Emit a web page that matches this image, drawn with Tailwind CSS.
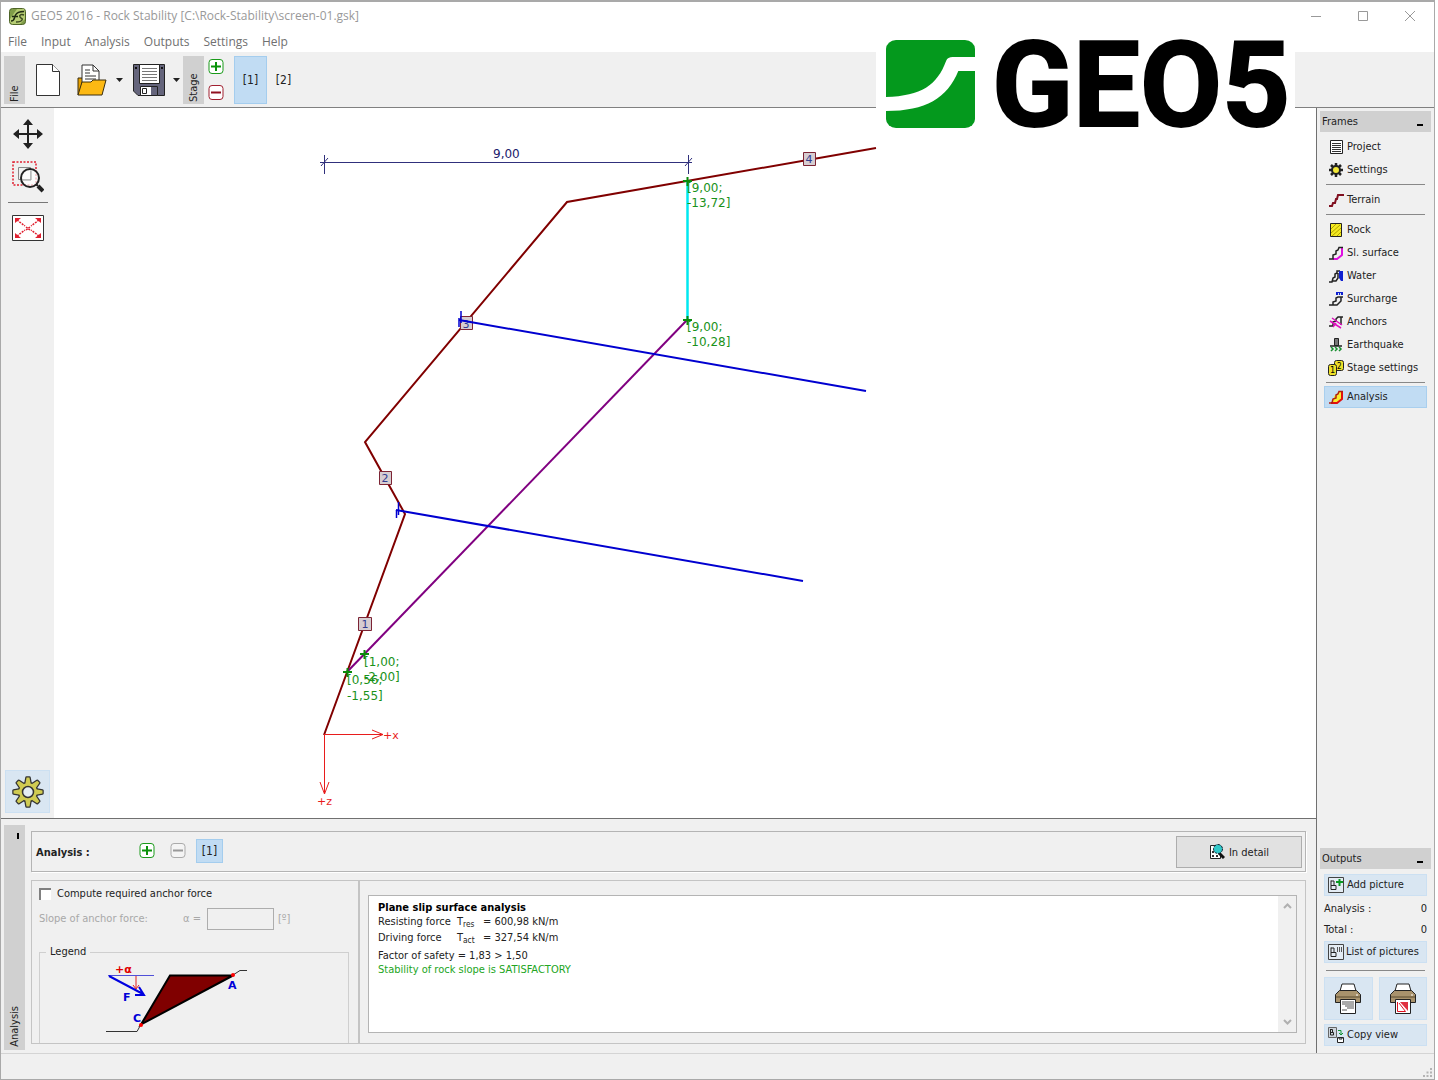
<!DOCTYPE html>
<html lang="en">
<head>
  <meta charset="UTF-8" />
  <meta name="viewport" content="width=device-width, initial-scale=1.0" />
  <title>GEO5 2016 - Rock Stability</title>
  <script src="https://cdn.jsdelivr.net/npm/@tailwindcss/browser@4"></script>
</head>
<body class="h-screen bg-white pr-[3px] font-['DejaVu_Sans_Condensed','DejaVu_Sans',sans-serif] text-[11px] leading-[14px] text-[#222]">
  <div class="relative flex h-full min-h-[720px] flex-col overflow-hidden border border-t-2 border-[#a9a9a9] bg-[#f0f0f0]">

    <!-- Title bar -->
    <header class="bg-white font-['Open_Sans',sans-serif] text-[12px]">
      <div class="flex h-7 items-center pl-2">
        <svg class="mr-[5px] h-[17px] w-[17px]" viewBox="0 0 17 17">
          <rect x="0.5" y="0.5" width="16" height="16" rx="3" fill="#7f9c48" stroke="#4e6427" />
          <path d="M1 11 8 1h7l1 4v6l-5 5H3l-2-2z" fill="#b5cc73" />
          <path d="M2 13c4 0 3-3 4.500-6S11 3.500 15 3.500M3 8.500h6" fill="none" stroke="#1f2a12" stroke-width="1.500" />
          <path d="M15 7c-3-1-5 0-4 2s3 1 2 3-4 2-6 2" fill="none" stroke="#3c4a22" stroke-width="1.500" />
        </svg>
        <h1 class="text-[#999]">GEO5 2016 - Rock Stability [C:\Rock-Stability\screen-01.gsk]</h1>
        <div class="ml-auto flex pr-px text-[#999]">
          <button aria-label="Minimize" class="flex h-7 w-[47px] items-center justify-center"><svg class="h-3 w-3" viewBox="0 0 12 12" stroke="currentColor"><path d="M1 6.500h10" /></svg></button>
          <button aria-label="Maximize" class="flex h-7 w-[47px] items-center justify-center"><svg class="h-3 w-3" viewBox="0 0 12 12" fill="none" stroke="currentColor"><path d="M1.500 1.500h9v9h-9z" /></svg></button>
          <button aria-label="Close" class="flex h-7 w-[47px] items-center justify-center"><svg class="h-3 w-3" viewBox="0 0 12 12" stroke="currentColor"><path d="m1 1 10 10M11 1 1 11" /></svg></button>
        </div>
      </div>
      <nav class="flex h-[22px] items-center gap-[14px] pt-[2px] pl-[7px] text-[#707070]">
        <a href="#">File</a>
        <a href="#">Input</a>
        <a href="#">Analysis</a>
        <a href="#">Outputs</a>
        <a href="#">Settings</a>
        <a href="#">Help</a>
      </nav>
    </header>

    <!-- Toolbar -->
    <div class="flex h-14 shrink-0 items-center border-b border-[#808080] pl-[3px]">
      <div class="flex h-12 w-[21px] items-center bg-[#d0d0d0] pl-1"><span class="h-full rotate-180 pt-[2px] [writing-mode:vertical-rl]">File</span></div>
      <button aria-label="New" class="ml-[11px] h-8 w-6">
        <svg viewBox="0 0 24 32" fill="#fff" stroke="#333"><path d="M.5.5h16l7 7v24H.5z" /><path d="M16.500.500v7h7" /></svg>
      </button>
      <button aria-label="Open" class="ml-[17px] h-8 w-[31px]">
        <svg viewBox="0 0 31 32" stroke="#3a2e10">
          <path d="M1 31V14h4l2 3h19v4" fill="#e8a000" />
          <path d="M5 21V1h11l6 6v14z" fill="#fff" stroke="#333" />
          <path d="M16 1v6h6M8 6h5M8 9h5M8 12h11M8 15h11" fill="none" stroke="#333" />
          <path d="M1 31 5 18h9l2-2h13l-4 15z" fill="#fdb913" />
        </svg>
      </button>
      <button aria-label="Open recent" class="ml-2 w-[7px]"><svg viewBox="0 0 7 4"><path d="M0 0h7L3.500 4z" fill="#222" /></svg></button>
      <button aria-label="Save" class="ml-[10px] h-8 w-8">
        <svg viewBox="0 0 32 32">
          <path d="M.5.5h31v31H5l-4.500-4.500z" fill="#65657c" stroke="#222" />
          <path d="M6.500.500h20v19h-20z" fill="#fff" stroke="#222" />
          <path d="M9 4.500h15M9 7.500h15M9 10.500h15M9 13.500h15M9 16.500h15" stroke="#777" />
          <path d="M2 3h2v2H2zM28 3h2v2h-2z" fill="#111" />
          <path d="M7.500 22.500h17v9h-17z" fill="#fff" stroke="#222" />
          <path d="M9.500 24.500h4v5h-4z" fill="#fff" stroke="#222" /><path d="M18 23h6v8h-6z" fill="#65657c" />
        </svg>
      </button>
      <button aria-label="Save options" class="ml-2 w-[7px]"><svg viewBox="0 0 7 4"><path d="M0 0h7L3.500 4z" fill="#222" /></svg></button>
      <div class="ml-[3px] flex h-12 w-[21px] items-center bg-[#d0d0d0] pl-1"><span class="h-full rotate-180 pt-[2px] [writing-mode:vertical-rl]">Stage</span></div>
      <div class="ml-1 flex flex-col gap-[11px]">
        <button aria-label="Add stage" class="h-[15px] w-4"><svg viewBox="0 0 16 15"><rect x="1" y="0.5" width="14" height="14" rx="3" fill="#fff" stroke="#1a9a1a" /><path d="M3 7.500h10M8 3v9" stroke="#0a920a" stroke-width="2" /></svg></button>
        <button aria-label="Remove stage" class="h-[15px] w-4"><svg viewBox="0 0 16 15"><rect x="1" y="0.5" width="14" height="14" rx="3" fill="#fff" stroke="#a02030" /><path d="M3 7.500h10" stroke="#901020" stroke-width="2" /></svg></button>
      </div>
      <button class="ml-[10px] h-12 w-[33px] border border-[#a4cdee] bg-[#c1dcf3] text-[12px]">[1]</button>
      <button class="h-12 w-[33px] text-[12px]">[2]</button>
    </div>

    <!-- Brand logo over the toolbar -->
    <div class="absolute top-[30px] right-[139px] flex h-[104px] w-[419px] items-center bg-white pl-[10px]">
      <svg class="h-[88px] w-[89px]" viewBox="0 0 80 88" preserveAspectRatio="none">
        <rect width="80" height="88" rx="9" fill="#04991d" />
        <path d="M0 57C32 56 46 45 54 21c1-3 3-4 6-4h20v14H65C55 58 36 71 0 71z" fill="#fff" />
      </svg>
      <span class="mt-1 ml-[17px] font-['Roboto',sans-serif] text-[119px] leading-[104px] font-bold text-black [-webkit-text-stroke:2px_black]">GEO5</span>
    </div>

    <div class="flex min-h-0 flex-1">
      <div class="flex min-w-0 flex-1 flex-col">
        <div class="flex min-h-0 flex-1">
          <!-- View tools -->
          <aside class="flex w-[53px] shrink-0 flex-col items-center pt-[10px] pb-[5px]">
            <button aria-label="Move" class="h-8 w-8">
              <svg viewBox="0 0 32 32" fill="#222"><path d="M15 6h2v20h-2zM6 15h20v2H6z" /><path d="m16 1 5 6H11zM16 31l5-6H11zM1 16l6-5v10zM31 16l-6-5v10z" /></svg>
            </button>
            <button aria-label="Zoom window" class="mt-[11px] h-8 w-8">
              <svg viewBox="0 0 32 32" fill="none"><path d="M1 1h23v23H1z" stroke="#e02030" stroke-width="1.500" stroke-dasharray="2 1.500" /><path d="M6.500 6.500h12v12h-12z" stroke="#888" /><circle cx="18" cy="17" r="9" fill="#fff" fill-opacity=".7" stroke="#222" stroke-width="2" /><path d="M11 19h8v-9" stroke="#999" /><path d="m24 23 2 2" stroke="#222" stroke-width="2" /><path d="m26 25 5 5" stroke="#222" stroke-width="4" /></svg>
            </button>
            <hr class="mt-[9px] w-10 border-[#777]" />
            <button aria-label="Zoom all" class="mt-3 h-[26px] w-8">
              <svg viewBox="0 0 32 26" fill="none"><path d="M.5.5h31v25H.5z" fill="#fff" stroke="#333" /><path d="m5 5 8 6M27 5l-8 6M5 21l8-6M27 21l-8-6M14 12l4 3M18 12l-4 3" stroke="#e02030" stroke-width="1.500" stroke-dasharray="2 1" /><path d="M3 3h6L3 8zM29 3h-6l6 5zM3 23h6l-6-5zM29 23h-6l6-5z" fill="#e02030" /></svg>
            </button>
            <button aria-label="View settings" class="mt-auto flex h-[43px] w-[45px] items-center justify-center border border-[#cce0f2] bg-[#d9e6f2]">
              <svg class="h-8 w-8" viewBox="-16 -16 32 32" stroke-linejoin="round">
                <defs><path id="cog" d="M-1.500-14.500h3L2.500-9V9l-1 5.500h-3L-2.500 9V-9z" /></defs>
                <g fill="#333" stroke="#333" stroke-width="2.500"><use href="#cog" /><use href="#cog" transform="rotate(45)" /><use href="#cog" transform="rotate(90)" /><use href="#cog" transform="rotate(135)" /><circle r="9" /></g>
                <g fill="#d0cb52"><use href="#cog" /><use href="#cog" transform="rotate(45)" /><use href="#cog" transform="rotate(90)" /><use href="#cog" transform="rotate(135)" /><circle r="9" /></g>
                <circle r="5.500" fill="#e4edf4" stroke="#333" stroke-width="1.500" />
              </svg>
            </button>
          </aside>

          <!-- Drawing area -->
          <main class="min-w-0 flex-1 bg-white">
            <svg class="h-full w-full font-['DejaVu_Sans',sans-serif] text-[12px]" viewBox="54 108 1262 710" preserveAspectRatio="xMinYMin meet" fill="none">
              <g stroke="#30307c"><path d="M324.500 155v19M688.500 155v19M320 162.500h372" /><path d="m321 166 7-8M685 166l7-8" /></g>
              <text x="493" y="158" fill="#20206c">9,00</text>
              <path d="M324 735 405 514 365 442 567 202 876 148" stroke="#800000" stroke-width="2" />
              <path d="M347 672 687 320" stroke="#800080" stroke-width="2" />
              <path d="M687.500 181v139" stroke="#00e8f0" stroke-width="2.500" />
              <g fill="#d6cdd1" stroke="#7c2434">
                <path d="M358.500 617.500h13v13h-13zM379.500 471.500h12v13h-12zM460.500 316.500h12v13h-12zM803.500 152.500h12v13h-12z" />
              </g>
              <g fill="#303c90" text-anchor="middle" class="text-[11px]">
                <text x="365" y="628">1</text><text x="385" y="482">2</text><text x="466" y="328">3</text><text x="809" y="163">4</text>
              </g>
              <g stroke="#0000d0" stroke-width="2"><path d="M459 320 866 391M396 510 803 581" /><path d="M461 311v12M459 318v9M398.500 502v13M396.500 510v8" stroke-width="1.500" /></g>
              <g stroke="#0a8a0a" stroke-width="2">
                <path d="M683 181h9M687.500 177v9M683 320h9M687.500 316v9M360 654h9M364.500 650v9M343 672h9M347.500 668v9" />
              </g>
              <g fill="#1a921a">
                <text x="687" y="192">[9,00;</text><text x="687" y="207">-13,72]</text>
                <text x="687" y="331">[9,00;</text><text x="687" y="346">-10,28]</text>
                <text x="364" y="666">[1,00;</text><text x="364" y="681">-2,00]</text>
                <text x="347" y="684">[0,56;</text><text x="347" y="700">-1,55]</text>
              </g>
              <path d="M324.500 735v58M324 734.500h59M372 730l11 4.500-11 4.500M320 782l4.500 12 4.500-12" stroke="#e81c1c" />
              <g fill="#e81c1c" class="text-[11px]"><text x="383" y="739">+x</text><text x="317" y="805">+z</text></g>
            </svg>
          </main>
        </div>

        <!-- Analysis panel -->
        <section class="flex h-[235px] shrink-0 border-t border-[#707070] pt-[6px] pl-[3px]">
          <div class="mb-[3px] flex w-[21px] flex-col items-center justify-between bg-[#d0d0d0] pt-2">
            <button aria-label="Collapse" class="ml-[6px] h-[6px] w-[2px] bg-black"></button>
            <span class="rotate-180 pt-[3px] [writing-mode:vertical-rl]">Analysis</span>
          </div>
          <div class="mr-[10px] ml-[6px] flex min-w-0 flex-1 flex-col pt-[6px]">
            <div class="flex h-[41px] items-center border border-[#b4b4b4] pr-[3px] pl-1 shadow-[1px_1px_0_#fff]">
              <h2 class="w-[103px] pt-[2px] font-bold">Analysis :</h2>
              <div class="flex items-center pb-[2px]">
                <button aria-label="Add analysis" class="h-[15px] w-4"><svg viewBox="0 0 16 15"><rect x="1" y="0.5" width="14" height="14" rx="3" fill="#fff" stroke="#1a9a1a" /><path d="M3 7.500h10M8 3v9" stroke="#0a920a" stroke-width="2" /></svg></button>
                <button aria-label="Remove analysis" disabled class="ml-[15px] h-[15px] w-4"><svg viewBox="0 0 16 15"><rect x="1" y="0.5" width="14" height="14" rx="3" fill="#f4f4f4" stroke="#aaa" /><path d="M3 7.500h10" stroke="#999" stroke-width="2" /></svg></button>
                <button class="ml-[10px] h-6 w-[27px] border border-[#a4cdee] bg-[#c1dcf3] text-[12px]">[1]</button>
              </div>
              <button class="ml-auto flex h-8 w-[126px] items-center justify-center gap-1 border border-[#adadad] bg-[#e1e1e1] pt-px">
                <svg class="h-4 w-4" viewBox="0 0 16 16"><path d="M1.500 1.500h10v13h-10z" fill="#fff" stroke="#222" /><path d="M3 8h2M3 12h2M7 12h2" stroke="#333" stroke-width="2" /><path d="m10 9 5 5" stroke="#111" stroke-width="3" /><circle cx="9" cy="5" r="4.500" fill="#30c8c8" stroke="#123" stroke-dasharray="3 1" /></svg>
                <span class="pt-px">In detail</span>
              </button>
            </div>
            <div class="mt-2 flex h-[164px]">
              <div class="flex w-[328px] flex-col border border-[#c4c4c4] pr-[9px] pl-[7px]">
                <label class="mt-[6px] flex items-center gap-[6px]">
                  <input type="checkbox" class="h-3 w-3 appearance-none border-t-2 border-l-2 border-[#808080] bg-white" />
                  Compute required anchor force
                </label>
                <div class="mt-[7px] flex h-[22px] items-center text-[#a8a8a8]">
                  <label for="slope" class="flex w-[168px] justify-between pr-[6px]"><span>Slope of anchor force:</span><span>α =</span></label>
                  <input id="slope" type="text" disabled class="h-[22px] w-[67px] border border-[#adadad] bg-[#f0f0f0]" />
                  <span class="ml-1">[º]</span>
                </div>
                <fieldset class="mt-[15px] min-h-0 flex-1 border border-b-0 border-[#cfcfcf] px-[6px]">
                  <legend class="px-1">Legend</legend>
                  <svg class="mt-[2px] ml-[59px] h-[72px] w-[144px] font-['DejaVu_Sans',sans-serif] text-[11px] font-bold" viewBox="105 961 144 72" fill="none">
                    <path d="M106 1031.500h31l5-9M233 975l7-4.500h7" stroke="#333" />
                    <path d="M170 975.500h63l-92 49z" fill="#800000" stroke="#000" stroke-width="2" />
                    <path d="M108 975.500h46" stroke="#5050d8" />
                    <path d="m109 976 34 18M135 995h9l-5-8" stroke="#0000e0" stroke-width="2" />
                    <path d="M136 976v12M133 985l3 4 3-4" stroke="#e02020" />
                    <circle cx="141" cy="1025" r="2" fill="#f00" /><circle cx="233" cy="975" r="2" fill="#f00" />
                    <text x="115" y="973" fill="#e00000">+α</text>
                    <g fill="#0000d8"><text x="123" y="1001">F</text><text x="133" y="1022">C</text><text x="228" y="989">A</text></g>
                  </svg>
                </fieldset>
              </div>
              <div class="min-w-0 flex-1 border border-[#c4c4c4] pt-[14px] pr-[8px] pb-[10px] pl-[8px]">
                <div class="flex h-full border border-[#b4b4b4] bg-white">
                  <div class="flex-1 pt-[5px] pl-[9px]">
                    <h3 class="font-bold text-black">Plane slip surface analysis</h3>
                    <table class="leading-[14px]">
                      <tbody>
                        <tr class="h-4"><td class="w-[79px] p-0 align-top">Resisting force</td><td class="w-[26px] p-0 align-top">T<sub>res</sub></td><td class="p-0 align-top">= 600,98 kN/m</td></tr>
                        <tr class="h-4"><td class="p-0 align-top">Driving force</td><td class="p-0 align-top">T<sub>act</sub></td><td class="p-0 align-top">= 327,54 kN/m</td></tr>
                      </tbody>
                    </table>
                    <p class="mt-[2px]">Factor of safety = 1,83 &gt; 1,50</p>
                    <p class="text-[#22a522]">Stability of rock slope is SATISFACTORY</p>
                  </div>
                  <div class="flex w-[18px] flex-col items-center justify-between bg-[#f0f0f0] py-[7px]">
                    <svg class="h-[6px] w-[9px]" viewBox="0 0 9 6" fill="none" stroke="#b0b0b0" stroke-width="2"><path d="m1 5 3.500-3.500L8 5" /></svg>
                    <svg class="h-[6px] w-[9px]" viewBox="0 0 9 6" fill="none" stroke="#b0b0b0" stroke-width="2"><path d="m1 1 3.500 3.500L8 1" /></svg>
                  </div>
                </div>
              </div>
            </div>
          </div>
        </section>
      </div>

      <!-- Frames and outputs -->
      <aside class="flex w-[118px] shrink-0 flex-col border-l border-[#707070] pt-[3px] pr-[3px] pl-[3px]">
        <div class="flex h-[21px] shrink-0 items-center justify-between bg-[#d0d0d0] pr-2 pl-[2px]">Frames <button aria-label="Collapse frames" class="mt-[7px] h-[2px] w-[6px] bg-black"></button></div>
        <nav class="mt-[3px] flex flex-col px-1">
          <a href="#" class="flex h-[23px] items-center gap-[3px] pl-1">
            <svg class="h-4 w-4" viewBox="0 0 16 16"><path d="M2.500 1.500h12v13h-12z" fill="#fff" stroke="#222" /><path d="M4 4.500h9M4 6.500h9M4 8.500h9M4 10.500h9M4 12.500h9" stroke="#333" /></svg>Project</a>
          <a href="#" class="flex h-[23px] items-center gap-[3px] pl-1">
            <svg class="h-4 w-4" viewBox="-8 -8 16 16"><path d="M-7 0H7M0-7V7M-5-5 5 5M5-5-5 5" stroke="#222" stroke-width="2.500" /><circle r="4" fill="#f2e838" stroke="#222" stroke-width="2" /></svg>Settings</a>
          <hr class="mx-[2px] my-[3px] border-[#888]" />
          <a href="#" class="flex h-[23px] items-center gap-[3px] pl-1">
            <svg class="h-4 w-4" viewBox="0 0 16 16" fill="none"><path d="M1 14h3l1-3h2l1-4h1l1-4h6" stroke="#801020" stroke-width="2" /></svg>Terrain</a>
          <hr class="mx-[2px] my-[3px] border-[#888]" />
          <a href="#" class="flex h-[23px] items-center gap-[3px] pl-1">
            <svg class="h-4 w-4" viewBox="0 0 16 16"><path d="M2.500 1.500h11v13h-11z" fill="#f4ea20" stroke="#222" /><path d="m3 7 5-5M3 11l9-8M4 14l9-8M9 14l4-4" stroke="#b0a000" /></svg>Rock</a>
          <a href="#" class="flex h-[23px] items-center gap-[3px] pl-1">
            <svg class="h-4 w-4" viewBox="0 0 16 16" fill="none"><path d="M5 14h4l5-4V2.500" stroke="#e010e0" stroke-width="2" /><path d="M1 14h4v-4l3-1V6l2-1 1-2.500h4" stroke="#222" stroke-width="1.500" /></svg>Sl. surface</a>
          <a href="#" class="flex h-[23px] items-center gap-[3px] pl-1">
            <svg class="h-4 w-4" viewBox="0 0 16 16" fill="none"><path d="M1 14h3l1-4 2-1V6l2-1V3h3M4 13h4l2-3V5" stroke="#222" stroke-width="1.500" /><path d="M11 3h4v10h-2l-2-3z" fill="#1020d0" /></svg>Water</a>
          <a href="#" class="flex h-[23px] items-center gap-[3px] pl-1">
            <svg class="h-4 w-4" viewBox="0 0 16 16" fill="none"><path d="M1 14h4v-3l3-1V7l2-1h5M5 14h4l4-4V6" stroke="#222" stroke-width="1.500" /><path d="M8 1h7v3H8z" fill="#1020d0" /><path d="M10.500 2v2M12.500 2v2" stroke="#cde" /></svg>Surcharge</a>
          <a href="#" class="flex h-[23px] items-center gap-[3px] pl-1">
            <svg class="h-4 w-4" viewBox="0 0 16 16" fill="none"><path d="M1 12h4V8l3-1V5l2-2h5M13 11V3" stroke="#222" stroke-width="1.500" /><path d="m4 4 10 7M2 7l11 7M5 13l3-4" stroke="#e010c0" stroke-width="1.500" /></svg>Anchors</a>
          <a href="#" class="flex h-[23px] items-center gap-[3px] pl-1">
            <svg class="h-4 w-4" viewBox="0 0 16 16" fill="none"><path d="M6.500 1.500h4v7h-4z" fill="#777" stroke="#222" /><path d="M2 9h12" stroke="#222" stroke-width="1.500" /><path d="m3 10 2 2-2 2M7 10l2 2-2 2M11 10l2 2-2 2" stroke="#189030" stroke-width="1.500" /></svg>Earthquake</a>
          <a href="#" class="flex h-[23px] items-center gap-[3px] pl-1">
            <svg class="h-4 w-4" viewBox="0 0 16 16"><rect x="6.500" y="0.5" width="9" height="10" rx="2" fill="#eee028" stroke="#222" /><rect x="0.5" y="4.500" width="8" height="11" rx="2" fill="#eee028" stroke="#222" /><text x="2" y="13" font-size="9">1</text><text x="9" y="9" font-size="8">2</text></svg>Stage settings</a>
          <hr class="mx-[2px] my-[3px] border-[#888]" />
          <a href="#" class="flex h-[22px] items-center gap-[3px] border border-[#a9cfee] bg-[#c1dcf3] pl-[3px]">
            <svg class="h-4 w-4" viewBox="0 0 16 16" fill="none"><path d="M4 14h5l5-5V3h-4l-1 3-3 1v3H4z" fill="#f8ee30" /><path d="M3 14h6l5-4V2.500" stroke="#e01010" stroke-width="2" /><path d="M1 14h3l1-4 3-1V6l2-1 1-2.500h4" stroke="#b02010" stroke-width="1.500" /></svg>Analysis</a>
        </nav>

        <div class="mt-auto flex h-[21px] shrink-0 items-center justify-between bg-[#d0d0d0] pr-2 pl-[2px]">Outputs <button aria-label="Collapse outputs" class="mt-[7px] h-[2px] w-[6px] bg-black"></button></div>
        <div class="flex flex-col px-1 pt-[5px] pb-[7px]">
          <button class="flex h-[22px] items-center gap-[3px] border border-[#cce0f2] bg-[#d9e6f2] pl-[3px]">
            <svg class="h-4 w-4" viewBox="0 0 16 16" fill="none"><path d="M.5.5h15v15H.5z" fill="#e4ecf4" stroke="#444" /><path d="M3 3.500v9h5v-4H3M3 4h3v4" stroke="#222" /><path d="M8 5h7M11.500 2v7" stroke="#089820" stroke-width="2" /></svg>Add picture</button>
          <p class="mt-[2px] flex h-[21px] items-center justify-between">Analysis : <span>0</span></p>
          <p class="flex h-[21px] items-center justify-between">Total : <span>0</span></p>
          <button class="mt-[1px] flex h-[22px] items-center gap-[2px] border border-[#cce0f2] bg-[#d9e6f2] pl-[3px] whitespace-nowrap">
            <svg class="h-4 w-4 shrink-0" viewBox="0 0 16 16" fill="none"><path d="M.5.5h15v15H.5z" fill="#e4ecf4" stroke="#444" /><path d="M3 3.500v9h5v-4H3M3 4h3v4" stroke="#222" /><path d="M9.500 3v5M11.500 3v5M13.500 3v5" stroke="#555" /></svg>List of pictures</button>
          <hr class="mx-[2px] mt-[7px] mb-[6px] border-[#888]" />
          <div class="grid grid-cols-2 gap-[6px]">
            <button aria-label="Print text" class="flex h-[43px] items-center justify-center border border-[#cce0f2] bg-[#d9e6f2]">
              <svg class="h-8 w-[26px]" viewBox="0 0 26 32"><path d="m5 8 2-7h12l2 7z" fill="#fff" stroke="#222" /><path d="M.5 11.500l4-4h17l4 4v8H.500z" fill="#a8926c" stroke="#222" /><path d="M1 14h24" stroke="#5a4c30" /><path d="M21 12h2" stroke="#fff" /><path d="M5.500 16.500h15v14h-15z" fill="#fff" stroke="#222" /><path d="M7 19h12M7 21h12M10 23h9M12 25h7M7 27h5" stroke="#555" /></svg>
            </button>
            <button aria-label="Print picture" class="flex h-[43px] items-center justify-center border border-[#cce0f2] bg-[#d9e6f2]">
              <svg class="h-8 w-[26px]" viewBox="0 0 26 32"><path d="m5 8 2-7h12l2 7z" fill="#fff" stroke="#222" /><path d="M.5 11.500l4-4h17l4 4v8H.500z" fill="#a8926c" stroke="#222" /><path d="M1 14h24" stroke="#5a4c30" /><path d="M21 12h2" stroke="#fff" /><path d="M5.500 16.500h15v14h-15z" fill="#fff" stroke="#222" /><path d="M10 19h8v9z" fill="#e03040" /><path d="M7.500 19v9.500h8L9 20" fill="none" stroke="#e01020" /></svg>
            </button>
          </div>
          <button class="mt-1 flex h-[22px] items-center gap-[3px] border border-[#cce0f2] bg-[#d9e6f2] pl-[3px]">
            <svg class="h-4 w-4" viewBox="0 0 16 16" fill="none"><path d="M.5.5h8v10h-8z" fill="#ccd4dc" stroke="#666" /><path d="M2.500 2v6h3V5.500h-3M2.500 2.500h2v3" stroke="#222" /><path d="M10 3.500h3V8M11 6l2 2 2-2" stroke="#109030" /><path d="M9.500 10.500h6v5h-6zM11 10v2h3v-2" fill="#fff" stroke="#222" /></svg>Copy view</button>
        </div>
      </aside>
    </div>

    <!-- Status bar -->
    <footer class="flex h-[26px] shrink-0 items-end justify-end border-t border-[#d4d4d4] p-[2px]">
      <svg class="h-[9px] w-[9px]" viewBox="0 0 9 9" fill="#b4b4b4"><path d="M7 0h2v2H7zM3.500 3.500h2v2h-2zM7 3.500h2v2H7zM0 7h2v2H0zM3.500 7h2v2h-2zM7 7h2v2H7z" /></svg>
    </footer>
  </div>
</body>
</html>
